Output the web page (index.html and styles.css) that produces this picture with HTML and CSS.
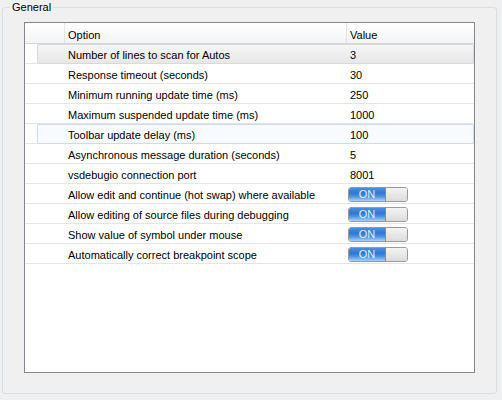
FILE: index.html
```html
<!DOCTYPE html>
<html>
<head>
<meta charset="utf-8">
<link rel="stylesheet" href="styles.css">
</head>
<body>
<div class="group">
  <span class="legend">General</span>
  <div class="list">
    <div class="row head">
      <div class="gutter"></div>
      <div class="opt">Option</div>
      <div class="val">Value</div>
    </div>
    <div class="row"><div class="hl gray"></div><div class="gutter"></div><div class="opt">Number of lines to scan for Autos</div><div class="val">3</div></div>
    <div class="row"><div class="gutter"></div><div class="opt">Response timeout (seconds)</div><div class="val">30</div></div>
    <div class="row"><div class="gutter"></div><div class="opt">Minimum running update time (ms)</div><div class="val">250</div></div>
    <div class="row"><div class="gutter"></div><div class="opt">Maximum suspended update time (ms)</div><div class="val">1000</div></div>
    <div class="row"><div class="hl blue"></div><div class="gutter"></div><div class="opt">Toolbar update delay (ms)</div><div class="val">100</div></div>
    <div class="row"><div class="gutter"></div><div class="opt">Asynchronous message duration (seconds)</div><div class="val">5</div></div>
    <div class="row"><div class="gutter"></div><div class="opt">vsdebugio connection port</div><div class="val">8001</div></div>
    <div class="row"><div class="gutter"></div><div class="opt">Allow edit and continue (hot swap) where available</div><div class="val"><span class="toggle"><span class="on">ON</span><span class="knob"></span></span></div></div>
    <div class="row"><div class="gutter"></div><div class="opt">Allow editing of source files during debugging</div><div class="val"><span class="toggle"><span class="on">ON</span><span class="knob"></span></span></div></div>
    <div class="row"><div class="gutter"></div><div class="opt">Show value of symbol under mouse</div><div class="val"><span class="toggle"><span class="on">ON</span><span class="knob"></span></span></div></div>
    <div class="row"><div class="gutter"></div><div class="opt">Automatically correct breakpoint scope</div><div class="val"><span class="toggle"><span class="on">ON</span><span class="knob"></span></span></div></div>
  </div>
</div>
</body>
</html>
```
FILE: styles.css
```css
html, body {
  margin: 0;
  padding: 0;
  background: #f0f0f0;
}
body {
  font-family: "Liberation Sans", Arial, sans-serif;
  font-size: 11px;
  color: #000;
  padding-top: 7px;
}
.group {
  position: relative;
  box-sizing: border-box;
  margin: 0 5px 0 2px;
  height: 387px;
  border: 1px solid #d5dfe5;
  border-radius: 3px;
  padding: 14px 21px 0 21px;
}
.legend {
  position: absolute;
  top: -7px;
  left: 7px;
  padding: 0 2px;
  background: #f0f0f0;
  line-height: 13px;
  font-size: 11px;
  color: #000;
}
.list {
  box-sizing: border-box;
  height: 351px;
  border: 1px solid #828790;
  background: #fff;
}
.row {
  position: relative;
  display: flex;
  box-sizing: border-box;
  height: 20px;
  border-bottom: 1px solid #e5e5e5;
  align-items: stretch;
}
.row.head {
  height: 21px;
  border-bottom: 1px solid #d5d5d5;
  background: linear-gradient(#ffffff, #f3f4f6);
}
.gutter {
  width: 39px;
  flex: none;
}
.opt, .val {
  position: relative;
  box-sizing: border-box;
  display: flex;
  align-items: center;
  padding-top: 3px;
  white-space: nowrap;
}
.opt {
  width: 282px;
  flex: none;
  padding-left: 4px;
}
.val {
  flex: 1;
  padding-left: 4px;
}
.head .opt, .head .val {
  border-left: 1px solid #e3e4e6;
  padding-left: 3px;
}
.hl {
  position: absolute;
  left: 12px;
  right: 0;
  top: 0;
  bottom: -1px;
  border-radius: 2px;
  box-sizing: border-box;
}
.hl.gray {
  border: 1px solid #d9d9d9;
  background: linear-gradient(#f6f6f6, #e7e7e7);
}
.hl.blue {
  border: 1px solid #c9dcf2;
  background: #f8fbfe;
}
.toggle {
  display: flex;
  width: 60px;
  height: 15px;
  box-sizing: border-box;
  border: 1px solid #9a9a9a;
  border-radius: 3px;
  overflow: hidden;
  margin-left: -2px;
  margin-top: -2px;
}
.toggle .on {
  width: 36px;
  flex: none;
  background: linear-gradient(#4a8ee0 0%, #2f78d2 40%, #4d93e2 65%, #a9d0fa 100%);
  color: #e4eefb;
  font-size: 11px;
  line-height: 13px;
  text-align: center;
  border-right: 1px solid #8a8a8a;
}
.toggle .knob {
  flex: 1;
  background: linear-gradient(#f4f4f4, #dcdcdc);
}
```
